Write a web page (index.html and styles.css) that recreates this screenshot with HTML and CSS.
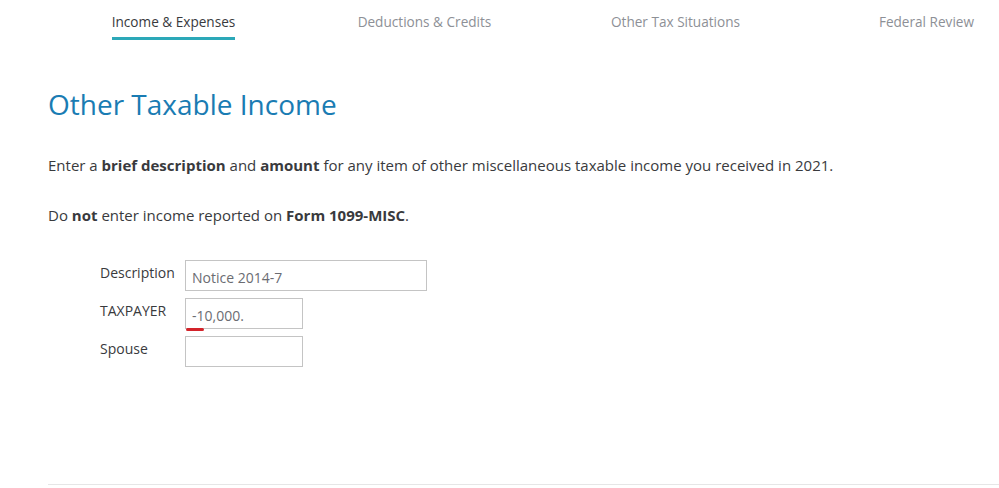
FILE: index.html
```html
<!DOCTYPE html>
<html lang="en">
<head>
  <meta charset="UTF-8">
  <title>Other Taxable Income</title>
  <link rel="stylesheet" href="styles.css">
</head>
<body>
<nav class="steps">
  <div class="step active"><span>Income &amp; Expenses</span></div>
  <div class="step"><span>Deductions &amp; Credits</span></div>
  <div class="step"><span>Other Tax Situations</span></div>
  <div class="step last"><span>Federal Review</span></div>
</nav>

<main class="content">
  <h1>Other Taxable Income</h1>
  <p>Enter a <strong>brief description</strong> and <strong>amount</strong> for any item of other miscellaneous taxable income you received in 2021.</p>
  <p>Do <strong>not</strong> enter income reported on <strong>Form 1099-MISC</strong>.</p>

  <div class="form">
    <label>Description</label>
    <div class="field wide">Notice 2014-7</div>
    <label>TAXPAYER</label>
    <div class="field">-10,000.<span class="mark"></span></div>
    <label>Spouse</label>
    <div class="field"></div>
  </div>
</main>

<div class="divider"></div>
</body>
</html>
```

FILE: styles.css
```css
body {
  margin: 0;
  font-family: "Open Sans", Lato, sans-serif;
  color: #393a3d;
  background-color: white;
  overflow: hidden;
}

.steps {
  display: grid;
  grid-template-columns: repeat(3, 251px) 1fr;
  margin-left: 48px;
  padding-top: 12px;
}

.step {
  text-align: center;
  font-size: 13.6px;
  color: #8d9096;
}

.step.last {
  text-align: right;
  padding-right: 25px;
}

.step span {
  display: inline-block;
  padding-bottom: 6px;
  border-bottom: 3px solid transparent;
}

.step.active {
  color: #393a3d;
}

.step.active span {
  border-bottom-color: #2ca8b8;
}

.content {
  padding: 0 48px;
}

h1 {
  margin: 46px 0 34px;
  font-size: 28px;
  font-weight: 400;
  line-height: 36px;
  color: #1a7cb3;
}

p {
  margin: 0 0 31px;
  font-size: 15px;
  line-height: 19px;
}

.form {
  display: grid;
  grid-template-columns: 85px auto;
  justify-content: start;
  row-gap: 7px;
  margin-left: 52px;
  margin-top: 35px;
}

.form label {
  font-size: 14px;
  padding-top: 3px;
}

.field {
  position: relative;
  width: 104px;
  height: 29px;
  border: 1px solid #c4c4c4;
  font-size: 14px;
  color: #6b6c72;
  padding: 0 6px;
  line-height: 33px;
  box-sizing: content-box;
}

.field.wide {
  width: 228px;
}

.mark {
  position: absolute;
  left: 0;
  bottom: -3px;
  width: 18px;
  height: 3px;
  border-radius: 2px;
  background-color: #d3232a;
}

.divider {
  height: 1px;
  background-color: #e6e6e6;
  position: absolute;
  top: 484px;
  left: 48px;
  right: 0;
}
```
